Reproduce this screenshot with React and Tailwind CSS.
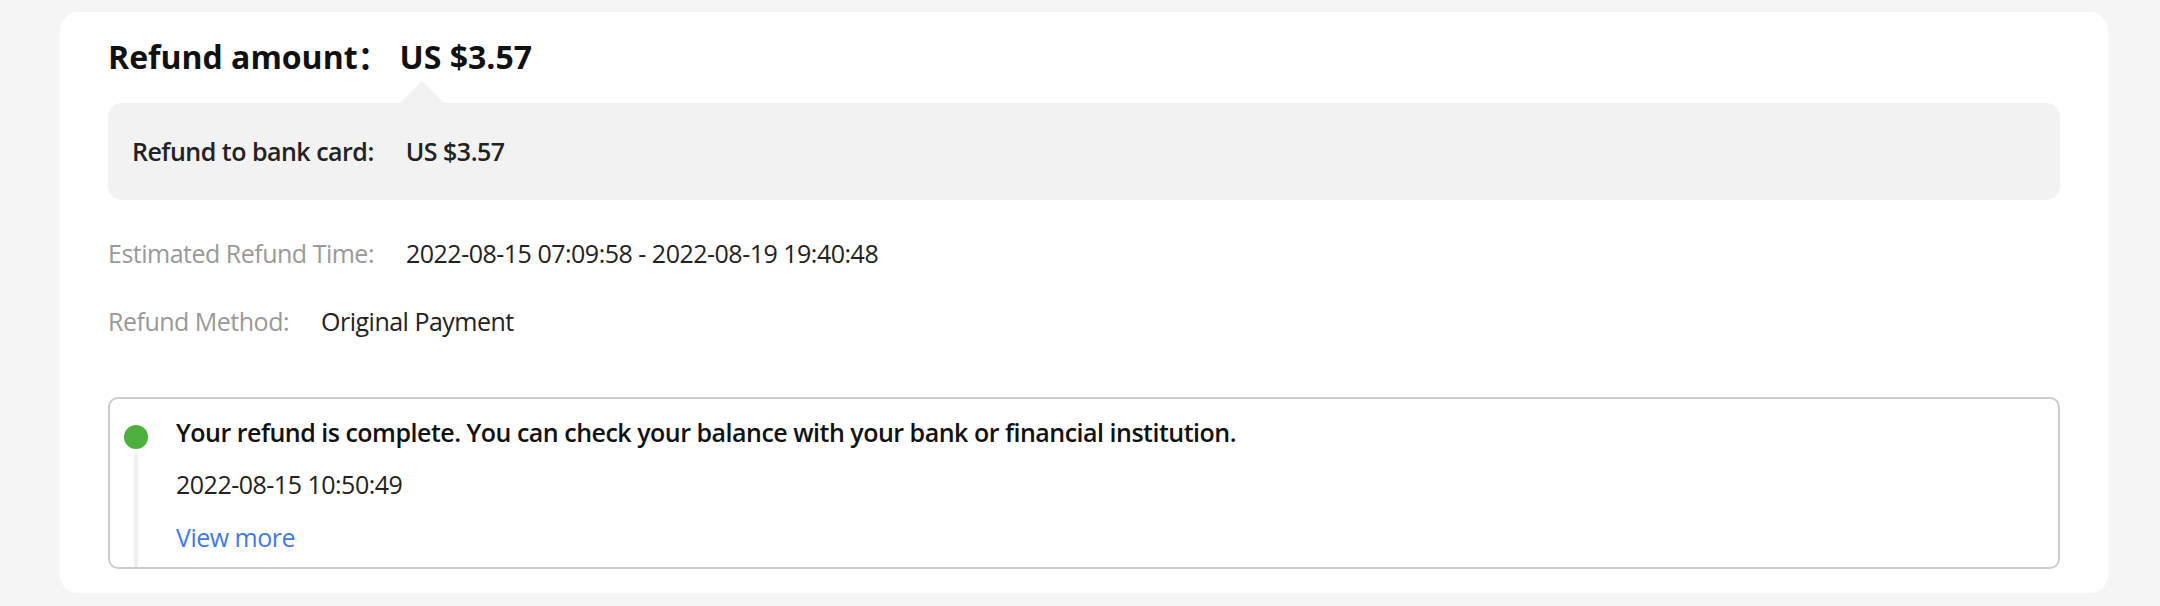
import React from 'react';

const summary = {
  amount: 'US $3.57',
  bankCard: 'US $3.57',
  estimated: '2022-08-15 07:09:58 - 2022-08-19 19:40:48',
  method: 'Original Payment',
};

const events = [
  {
    title: 'Your refund is complete. You can check your balance with your bank or financial institution.',
    time: '2022-08-15 10:50:49',
  },
];

const InfoRow = ({ label, value, className = '' }) => (
  <div className={`flex items-center text-[25px] leading-[40px] tracking-[-0.5px] ${className}`}>
    <span className="mr-[32px] text-[#999999]">{label}</span>
    <span className="text-[#222222]">{value}</span>
  </div>
);

const RefundTimeline = ({ items }) => (
  <div className="mt-[56px] flex rounded-[10px] border-2 border-[#cccccc]">
    {items.map((item, index) => (
      <React.Fragment key={index}>
        {/* status dot with the track running down to the bottom edge */}
        <div className="flex w-[66px] shrink-0 flex-col items-center pr-[16px] pt-[26px] pl-[2px]">
          <span className="h-[24px] w-[24px] rounded-full bg-[#4caf3e]" />
          <span className="mt-[6px] w-[4px] flex-1 bg-[#f0f0f0]" />
        </div>
        <div className="flex flex-col pt-[13px] pb-[10px] text-[25px] leading-[40px] tracking-[-0.5px]">
          <p className="font-semibold text-[#111111]">{item.title}</p>
          <p className="mt-[12px] text-[#222222]">{item.time}</p>
          <a href="#" className="mt-[13px] text-[#3f7be6]">View more</a>
        </div>
      </React.Fragment>
    ))}
  </div>
);

export default function App() {
  return (
    <div className="h-[606px] w-[2160px] bg-[#f5f5f5] pt-[12px] font-['Open_Sans','Noto_Sans_CJK_SC',sans-serif]">
      <div className="mx-[52px] ml-[60px] rounded-[18px] bg-white px-[48px] pt-[21px] pb-[24px]">
        <h2 className="text-[32px] leading-[48px] font-bold text-[#111111]">
          Refund amount：<span className="ml-[10px]">{summary.amount}</span>
        </h2>

        <div className="relative mt-[22px] flex h-[97px] items-center rounded-[14px] bg-[#f2f2f2] px-[24px] text-[25px] font-semibold tracking-[-0.5px] text-[#222222]">
          <span className="absolute -top-[22px] left-[292px] h-0 w-0 border-x-[22px] border-b-[22px] border-x-transparent border-b-[#f2f2f2]" />
          <span className="mr-[32px]">Refund to bank card:</span>
          <span>{summary.bankCard}</span>
        </div>

        <InfoRow label="Estimated Refund Time:" value={summary.estimated} className="mt-[33px]" />
        <InfoRow label="Refund Method:" value={summary.method} className="mt-[28px]" />

        <RefundTimeline items={events} />
      </div>
    </div>
  );
}
